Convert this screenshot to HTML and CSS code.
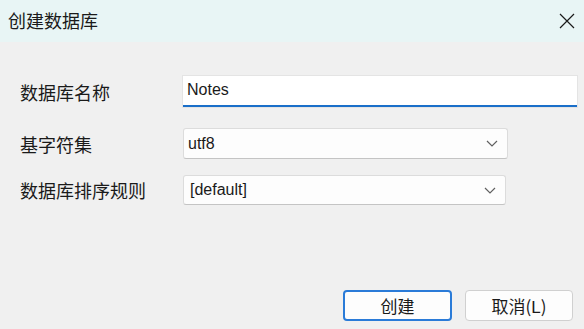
FILE: index.html
```html
<!DOCTYPE html>
<html lang="zh-CN">
<head>
  <meta charset="UTF-8"/>
  <title>创建数据库</title>
  <meta name="viewport" content="width=device-width, initial-scale=1.0"/>
  <link rel="stylesheet" href="styles.css">
</head>
<body>

<div class="dialog">
  <div class="titlebar">
    <span class="title">创建数据库</span>
    <svg class="close" width="16" height="16" viewBox="0 0 16 16">
      <path d="M1 1 L15 15 M15 1 L1 15" stroke="#1a1a1a" stroke-width="1.2" fill="none"/>
    </svg>
  </div>

  <div class="form">
    <div class="row row-name">
      <label for="dbname">数据库名称</label>
      <input type="text" id="dbname" class="text-input" value="Notes">
    </div>
    <div class="row row-charset">
      <label>基字符集</label>
      <div class="combo combo-charset">
        <span>utf8</span>
        <svg width="12" height="7" viewBox="0 0 12 7"><path d="M1 1 L6 6 L11 1" stroke="#606060" stroke-width="1.2" fill="none"/></svg>
      </div>
    </div>
    <div class="row row-collation">
      <label>数据库排序规则</label>
      <div class="combo combo-collation">
        <span class="indent">[default]</span>
        <svg width="12" height="7" viewBox="0 0 12 7"><path d="M1 1 L6 6 L11 1" stroke="#606060" stroke-width="1.2" fill="none"/></svg>
      </div>
    </div>
  </div>

  <div class="buttons">
    <button class="btn btn-primary">创建</button>
    <button class="btn">取消(<u>L</u>)</button>
  </div>
</div>

</body>
</html>
```

FILE: styles.css
```css
* {
  margin: 0; padding: 0; box-sizing: border-box;
  font-family: 'Liberation Sans', 'Noto Sans CJK SC', sans-serif;
}
body {
  background: #f0f0f0;
  color: #1a1a1a;
}
.dialog {
  height: 329px;
  display: flex;
  flex-direction: column;
}
.titlebar {
  height: 42px;
  background: #e8f5f5;
  display: flex;
  align-items: center;
  justify-content: space-between;
  padding: 0 9px 2px 8px;
}
.title {
  font-family: 'Noto Sans CJK SC', sans-serif;
  font-size: 18px;
  color: #1a1a1a;
}
.close {
  margin-top: 1px;
}
.form {
  padding: 34px 0 0 20px;
}
.row {
  display: flex;
  align-items: center;
}
.row label {
  width: 163px;
  font-family: 'Noto Sans CJK SC', sans-serif;
  font-size: 18px;
  color: #1a1a1a;
}
.text-input {
  width: 394px;
  height: 31px;
  background: #fff;
  border: none;
  border-bottom: 2px solid #1a6fc9;
  box-shadow: 0 0 0 1px #e4e4e4;
  padding: 0 4px 2px;
  font-size: 16px;
  color: #1a1a1a;
  outline: none;
}
.combo {
  height: 31px;
  background: #fdfdfd;
  border: 1px solid #dcdcdc;
  border-bottom-color: #c4c4c4;
  border-radius: 3px;
  display: flex;
  align-items: center;
  justify-content: space-between;
  padding: 0 9px 0 4px;
  font-size: 16px;
}
.combo-charset {
  width: 325px;
}
.combo-collation {
  width: 323px;
  height: 30px;
}
.indent {
  padding-left: 2px;
}
.row-charset {
  margin-top: 21px;
}
.row-collation {
  margin-top: 16px;
}
.buttons {
  margin-top: auto;
  display: flex;
  justify-content: flex-end;
  gap: 13px;
  padding: 0 11px 8px 0;
}
.btn {
  width: 108px;
  height: 31px;
  background: #fdfdfd;
  border: 1px solid #d0d0d0;
  border-radius: 4px;
  font-family: 'Noto Sans CJK SC', sans-serif;
  font-size: 17px;
  color: #1a1a1a;
}
.btn u {
  text-decoration: none;
}
.btn-primary {
  width: 109px;
  border: 2px solid #2a7bd8;
}
```
